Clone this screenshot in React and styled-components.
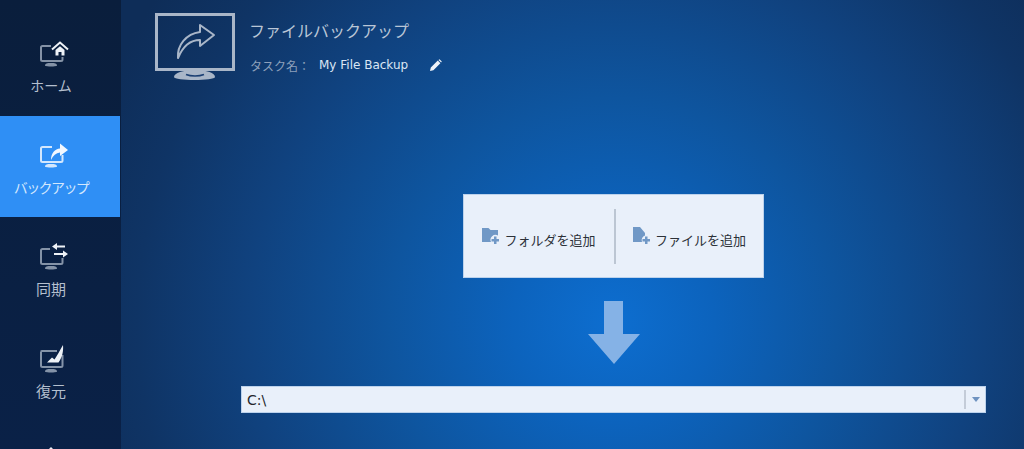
import React from "react";
import styled, { createGlobalStyle } from "styled-components";

const Global = createGlobalStyle`
  html, body { margin: 0; padding: 0; height: 449px; overflow: hidden; background: #0a1f3f; }
  #root { height: 449px; }
  * { box-sizing: border-box; }
  body { font-family: "Noto Sans CJK JP", "Noto Sans", sans-serif; }
`;

const Page = styled.div`
  display: flex;
  width: 1024px;
  height: 449px;
  overflow: hidden;
`;

const Sidebar = styled.nav`
  width: 121px;
  flex: none;
  height: 449px;
  overflow: hidden;
  padding-top: 14px;
  background: linear-gradient(180deg, #0a1e3c 0%, #0a2147 100%);
`;

const NavItem = styled.div`
  height: ${(p) => (p.$active ? 101 : 102)}px;
  width: 120px;
  display: flex;
  flex-direction: column;
  align-items: center;
  padding: ${(p) => p.$top}px 18px 0 0;
  background: ${(p) => (p.$active ? "#2f8ff5" : "transparent")};
  color: ${(p) => (p.$active ? "#d3e7fd" : "#b4bfce")};
`;

const NavIcon = styled.svg`
  width: 32px;
  height: 28px;
  margin-left: 6px;
  display: block;
  flex: none;
`;

const NavLabel = styled.span`
  font-size: ${(p) => (p.$kanji ? 15 : 14)}px;
  letter-spacing: ${(p) => p.$spacing || 0}px;
  line-height: 20px;
  margin-top: ${(p) => p.$gap}px;
  white-space: nowrap;
`;

const Main = styled.main`
  flex: 1;
  height: 449px;
  display: flex;
  flex-direction: column;
  background: radial-gradient(circle 560px at 492px 322px, #0d6ed0 0%, #0c63bd 18%, #0e559f 40%, #10427f 65%, #0f3465 85%, #0e2d58 100%);
`;

const Header = styled.header`
  display: flex;
  align-items: flex-start;
  gap: 15px;
  padding: 13px 0 0 34px;
  height: 194px;
  flex: none;
`;

const BigIcon = styled.svg`
  width: 80px;
  height: 68px;
  flex: none;
  display: block;
`;

const HeaderText = styled.div`
  display: flex;
  flex-direction: column;
`;

const Title = styled.h1`
  margin: 5px 0 0 -1px;
  font-size: 16px;
  line-height: 24px;
  font-weight: 400;
  color: #bac6d6;
`;

const TaskRow = styled.div`
  display: flex;
  align-items: center;
  margin-top: 13px;
  height: 20px;
`;

const TaskLabel = styled.span`
  font-size: 12px;
  color: #8da0bb;
  width: 69px;
  white-space: nowrap;
`;

const TaskName = styled.span`
  font-family: "DejaVu Sans", sans-serif;
  font-size: 12px;
  color: #dbe6f4;
  white-space: nowrap;
  width: 110px;
`;

const Pencil = styled.svg`
  width: 13px;
  height: 13px;
  display: block;
`;

const Center = styled.div`
  display: flex;
  flex-direction: column;
  align-items: flex-start;
`;

const AddCard = styled.div`
  margin-left: 342px;
  width: 301px;
  height: 84px;
  display: flex;
  align-items: center;
  background: #e9f0fa;
  border: 1px solid #bcd2ec;
`;

const AddButton = styled.div`
  flex: none;
  width: ${(p) => p.$width}px;
  height: 100%;
  display: flex;
  align-items: center;
  justify-content: center;
  gap: 4px;
  color: #2c3138;
  font-size: 13px;
  white-space: nowrap;
`;

const AddText = styled.span`
  padding-top: 6px;
`;

const AddIcon = styled.svg`
  width: 18px;
  height: 18px;
  display: block;
`;

const Divider = styled.div`
  width: 2px;
  height: 55px;
  background: #bcc6d3;
  flex: none;
`;

const Arrow = styled.svg`
  display: block;
  width: 52px;
  height: 63px;
  margin: 23px 0 0 467px;
`;

const Combo = styled.div`
  margin: 22px 0 0 120px;
  width: 745px;
  height: 27px;
  background: #e9f0fa;
  border: 1px solid #bcd2ec;
  display: flex;
  align-items: center;
  padding-left: 5px;
  font-family: "DejaVu Sans", sans-serif;
  font-size: 14px;
  color: #23262b;
`;

const ComboValue = styled.span`
  flex: 1;
`;

const ComboSep = styled.div`
  width: 2px;
  height: 19px;
  background: #c4ccd8;
`;

const ComboCaret = styled.div`
  width: 19px;
  display: flex;
  justify-content: center;
  &::after {
    content: "";
    border-left: 4px solid transparent;
    border-right: 4px solid transparent;
    border-top: 5px solid #6f93c0;
  }
`;

const Base = ({ y = 0, opacity = 0.72 }) => (
  <path
    transform={`translate(0 ${y})`}
    d="M7 24.500C7 22.600 9 22 13 22S19 22.600 19 24.500C19 25.800 7 25.800 7 24.500Z"
    fill="currentColor"
    opacity={opacity}
  />
);

const HomeIcon = () => (
  <NavIcon viewBox="0 0 32 28" aria-hidden="true">
    <path d="M13 5H4.500A1.500 1.500 0 0 0 3 6.500V18.500A1.500 1.500 0 0 0 4.500 20H23A1.500 1.500 0 0 0 24.500 18.500V16" fill="none" stroke="currentColor" strokeWidth="2" opacity=".72" />
    <Base />
    <path d="M14 8.500 22 1.500 30 8.500" fill="none" stroke="#eef2f7" strokeWidth="2" />
    <path d="M17.500 9 22 5.200 26.500 9V14.500H23.500V11H20.500V14.500H17.500Z" fill="#eef2f7" />
  </NavIcon>
);

const BackupIcon = () => (
  <NavIcon viewBox="0 0 32 28" aria-hidden="true">
    <path d="M14 5H4.500A1.500 1.500 0 0 0 3 6.500V18.500A1.500 1.500 0 0 0 4.500 20H23A1.500 1.500 0 0 0 24.500 18.500V13" fill="none" stroke="currentColor" strokeWidth="2" />
    <Base opacity={1} />
    <path d="M13 18C13 11 17 7 22 6.500V1.500L30 8 22 14V10.500C18 11 15 13.500 13 18Z" fill="#f2f8ff" />
  </NavIcon>
);

const SyncIcon = () => (
  <NavIcon viewBox="0 0 32 28" aria-hidden="true">
    <path d="M12 6H4.500A1.500 1.500 0 0 0 3 7.500V19.500A1.500 1.500 0 0 0 4.500 21H23A1.500 1.500 0 0 0 24.500 19.500V15" fill="none" stroke="currentColor" strokeWidth="2" opacity=".72" />
    <Base y={1} />
    <path d="M14 3.500 19 0V2.500H27V4.500H19V7Z M30 11 25 7.500V10H16V12H25V14.500Z" fill="#eef2f7" />
  </NavIcon>
);

const RestoreIcon = () => (
  <NavIcon viewBox="0 0 32 28" aria-hidden="true">
    <path d="M3 6.500A1.500 1.500 0 0 1 4.500 6H19M24.500 10V20.500A1.500 1.500 0 0 1 23 22H4.500A1.500 1.500 0 0 1 3 20.500V6.500" fill="none" stroke="currentColor" strokeWidth="2" opacity=".72" />
    <Base y={2} />
    <path d="M25 0C25.500 6 24.500 12 20.500 17.500L9 17.500 14 12.500 16.500 14.500C19 11 21.500 6 25 0Z" fill="#eef2f7" />
  </NavIcon>
);

const ToolIcon = () => (
  <NavIcon viewBox="0 0 32 28" aria-hidden="true">
    <path d="M9 5 13 1 17 5H9Z" fill="#eef2f7" />
  </NavIcon>
);

const items = [
  { label: "ホーム", Icon: HomeIcon, top: 27, gap: 6 },
  { label: "バックアップ", Icon: BackupIcon, active: true, top: 26, gap: 7, spacing: -1.6 },
  { label: "同期", Icon: SyncIcon, top: 26, gap: 8, kanji: true },
  { label: "復元", Icon: RestoreIcon, top: 26, gap: 8, kanji: true },
  { Icon: ToolIcon, top: 25 },
];

export default function App() {
  return (
    <Page>
      <Global />
      <Sidebar>
        {items.map(({ label, Icon, active, top, gap, spacing, kanji }, i) => (
          <NavItem key={i} $active={active} $top={top}>
            <Icon />
            {label && (
              <NavLabel $gap={gap} $spacing={spacing} $kanji={kanji}>
                {label}
              </NavLabel>
            )}
          </NavItem>
        ))}
      </Sidebar>
      <Main>
        <Header>
          <BigIcon viewBox="0 0 80 68" aria-hidden="true">
            <rect x="1.500" y="1.500" width="77" height="55" fill="none" stroke="#a9b6c8" strokeWidth="3" />
            <path d="M19 64C19 60 28 57 40 57S60 60 60 64C60 68 19 68 19 64Z" fill="#a9b6c8" />
            <path d="M31 61.500C36 63.500 44 63.500 49 61.500" fill="none" stroke="#1b3f73" strokeWidth="1.500" />
            <path d="M23 45C22 32 31 21 45 19V12L59 22 45 33V27C35 27 28 33 23 45Z" fill="none" stroke="#a9b6c8" strokeWidth="2" strokeLinejoin="round" />
          </BigIcon>
          <HeaderText>
            <Title>ファイルバックアップ</Title>
            <TaskRow>
              <TaskLabel>タスク名：</TaskLabel>
              <TaskName>My File Backup</TaskName>
              <Pencil viewBox="0 0 13 13" aria-hidden="true">
                <path d="M1 12 1.800 8.600 8.800 1.600 11.400 4.200 4.400 11.200Z M9.500 0.900 10.500 0.200 12.800 2.500 12.100 3.500Z" fill="#eef3fa" />
              </Pencil>
            </TaskRow>
          </HeaderText>
        </Header>
        <Center>
          <AddCard>
            <AddButton $width={150}>
              <AddIcon viewBox="0 0 18 18" aria-hidden="true">
                <path d="M0 1H6.500L8.500 3H16V8.500A5 5 0 0 0 9 15H0Z" fill="#7098c6" />
                <path d="M12 9.500h2.500v2.500h2.500v2.500h-2.500v2.500h-2.500v-2.500h-2.500v-2.500h2.500Z" fill="#7098c6" />
              </AddIcon>
              <AddText>フォルダを追加</AddText>
            </AddButton>
            <Divider />
            <AddButton $width={147}>
              <AddIcon viewBox="0 0 18 18" aria-hidden="true">
                <path d="M0 0H7L12 6V8.500A5 5 0 0 0 9 15H0Z" fill="#7098c6" />
                <path d="M12 9.500h2.500v2.500h2.500v2.500h-2.500v2.500h-2.500v-2.500h-2.500v-2.500h2.500Z" fill="#7098c6" />
              </AddIcon>
              <AddText>ファイルを追加</AddText>
            </AddButton>
          </AddCard>
          <Arrow viewBox="0 0 52 63" aria-hidden="true">
            <path d="M16 0H35V33H52L26 63 0 33H16Z" fill="#85b2e6" />
          </Arrow>
          <Combo>
            <ComboValue>C:\</ComboValue>
            <ComboSep />
            <ComboCaret />
          </Combo>
        </Center>
      </Main>
    </Page>
  );
}
